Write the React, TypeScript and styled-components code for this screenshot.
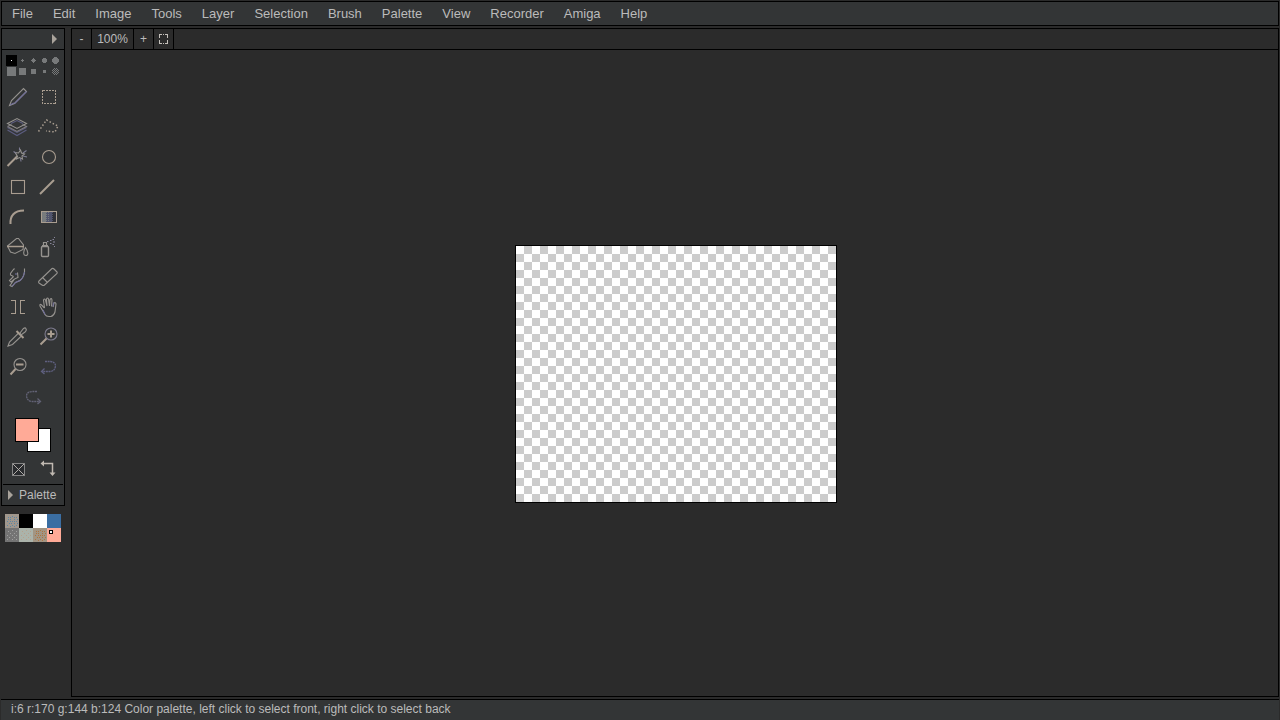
import React from "react";
import styled, { createGlobalStyle, css } from "styled-components";

const TAN = "#a99d90";
const GREY = "#96938f";
const BLUE = "#5c5d80";
const VIOLET = "#72709a";

const GlobalStyle = createGlobalStyle`
  *, *::before, *::after { box-sizing: border-box; }
  body {
    margin: 0;
    background: #2b2b2b;
    color: #bbbbbb;
    font: 12px/16px "Liberation Sans", Arial, sans-serif;
  }
  button {
    margin: 0;
    padding: 0;
    border: 0;
    background: none;
    color: inherit;
    font: inherit;
    cursor: pointer;
  }
  svg { display: block; }
`;

const App = styled.div`
  display: flex;
  flex-direction: column;
  gap: 2px;
  min-height: 100vh;
  padding: 1px 1px 0;
`;

const MenuBar = styled.nav`
  display: flex;
  height: 25px;
  border: 1px solid #000;
  background: #333536;
`;

const MenuItem = styled.button`
  padding: 0 10px;
  font-size: 13px;
  &:hover { background: #444648; }
`;

const Workspace = styled.main`
  flex: 1;
  display: flex;
  gap: 6px;
`;

const Sidebar = styled.aside`
  width: 64px;
  flex: none;
`;

const Panel = styled.section`
  border: 1px solid #000;
  background: #333536;
`;

const PanelHeader = styled.header`
  display: flex;
  justify-content: flex-end;
  height: 21px;
  padding-right: 7px;
  border-bottom: 1px solid #000;
`;

const BrushGrid = styled.div`
  display: grid;
  grid-template-columns: repeat(5, 11px);
  grid-auto-rows: 11px;
  justify-content: center;
  padding: 5px 0;
`;

const BrushButton = styled.button<{ $active?: boolean }>`
  background: ${(p) => (p.$active ? "#000" : "none")};
`;

const ToolGrid = styled.div`
  display: flex;
  flex-wrap: wrap;
  justify-content: center;
`;

const ToolButton = styled.button`
  width: 30px;
  height: 30px;
`;

const ColorPair = styled.div`
  position: relative;
  height: 42px;
`;

const Swatch = styled.button<{ $front?: boolean }>`
  position: absolute;
  width: 24px;
  height: 24px;
  border: 1px solid #000;
  ${(p) =>
    p.$front
      ? css`left: 13px; top: 6px; z-index: 1; background: #ffaa97;`
      : css`left: 25px; top: 16px; background: #fff;`}
`;

const ColorActions = styled.div`
  display: flex;
  justify-content: center;
`;

const PaletteHeader = styled.button`
  display: flex;
  align-items: center;
  gap: 6px;
  width: 60px;
  height: 21px;
  margin: 0 1px;
  padding-left: 5px;
  border-top: 1px solid #000;
`;

const PaletteColors = styled.div`
  display: grid;
  grid-template-columns: repeat(4, 14px);
  grid-auto-rows: 14px;
  padding: 8px 4px;
`;

const PaletteColor = styled.button<{ $color: string }>`
  background: ${(p) => p.$color};
`;

const Editor = styled.section`
  flex: 1;
  display: flex;
  flex-direction: column;
  border: 1px solid #000;
`;

const ZoomBar = styled.div`
  display: flex;
  height: 21px;
  border-bottom: 1px solid #000;
`;

const ZoomButton = styled.button<{ $wide?: boolean }>`
  display: flex;
  align-items: center;
  justify-content: center;
  width: ${(p) => (p.$wide ? 42 : 20)}px;
  border-right: 1px solid #000;
`;

const Stage = styled.div`
  flex: 1;
  display: flex;
  align-items: center;
  justify-content: center;
  padding: 2px 0 0 2px;
`;

const Artboard = styled.div`
  width: 322px;
  height: 258px;
  border: 1px solid #000;
  background: conic-gradient(#ccc 25%, #fff 0 50%, #ccc 0 75%, #fff 0) 0 0 / 16px 16px;
`;

const StatusBar = styled.footer`
  height: 21px;
  padding: 1px 10px;
  border-top: 1px solid #000;
  background: #333536;
`;

const menus = ["File", "Edit", "Image", "Tools", "Layer", "Selection", "Brush", "Palette", "View", "Recorder", "Amiga", "Help"];

const Arrow = () => (
  <svg width="5" height="20" viewBox="0 0 5 20" aria-hidden="true">
    <path d="M0 5L5 10L0 15Z" fill="#a9a39b" />
  </svg>
);

const brushes: { name: string; shape: React.ReactNode }[] = [
  { name: "Pixel", shape: <rect x="5" y="5" width="1" height="1" fill="#fff" /> },
  { name: "Small circle", shape: <path d="M5 4h1v1h1v1h-1v1h-1v-1h-1v-1h1z" /> },
  { name: "Medium circle", shape: <path d="M5 3h1v1h1v1h1v1h-1v1h-1v1h-1v-1h-1v-1h-1v-1h1v-1h1z" /> },
  { name: "Large circle", shape: <path d="M4 3h3v1h1v3h-1v1h-3v-1h-1v-3h1z" /> },
  { name: "Huge circle", shape: <path d="M4 2h3v1h1v1h1v3h-1v1h-1v1h-3v-1h-1v-1h-1v-3h1v-1h1z" /> },
  { name: "Huge square", shape: <rect x="1" y="1" width="9" height="9" /> },
  { name: "Large square", shape: <rect x="2" y="2" width="7" height="7" /> },
  { name: "Medium square", shape: <rect x="3" y="3" width="5" height="5" /> },
  { name: "Small square", shape: <rect x="4" y="4" width="3" height="3" /> },
  {
    name: "Dither",
    shape: <path d="M4 2h1v1h-1zM6 2h1v1h-1zM3 3h1v1h-1zM5 3h1v1h-1zM7 3h1v1h-1zM2 4h1v1h-1zM4 4h1v1h-1zM6 4h1v1h-1zM8 4h1v1h-1zM3 5h1v1h-1zM5 5h1v1h-1zM7 5h1v1h-1zM2 6h1v1h-1zM4 6h1v1h-1zM6 6h1v1h-1zM8 6h1v1h-1zM3 7h1v1h-1zM5 7h1v1h-1zM7 7h1v1h-1zM4 8h1v1h-1zM6 8h1v1h-1z" />,
  },
];

const tools: { name: string; icon: React.ReactNode }[] = [
  {
    name: "Pencil",
    icon: (
      <>
        <path d="M6.5 23.5L8.5 18.5L20.5 6.5L23.5 9.5L11.5 21.5Z" />
        <path d="M11.5 21.5L23.5 9.5M7 23L11 21" stroke={VIOLET} />
      </>
    ),
  },
  {
    name: "Select",
    icon: <rect x="9.5" y="8.5" width="13" height="13" stroke={TAN} strokeDasharray="2 1" shapeRendering="crispEdges" />,
  },
  {
    name: "Layers",
    icon: (
      <>
        <path d="M4.5 18L14 23.5L23.5 18M4.5 15.5L14 20.5L23.5 15.5" stroke={BLUE} />
        <path d="M4.5 14.5L8.5 12.5M4.5 14.5L14 19.5L23.5 14.5L19.5 12.5" stroke="#817e80" />
        <path d="M4.5 11.5L14 6.5L23.5 11.5L14 16.5Z" />
        <path d="M8 11.5L14 8.5L20 11.5" stroke={BLUE} />
      </>
    ),
  },
  {
    name: "Polygon select",
    icon: (
      <path d="M5.5 19.5L13.5 8L19 11L25 14L22 20L13 19" stroke={TAN} strokeWidth="1.5" strokeDasharray="1.5 2" />
    ),
  },
  {
    name: "Magic wand",
    icon: (
      <>
        <path d="M4.5 24L14.5 14" stroke={TAN} strokeWidth="2" />
        <path d="M12 10.5L15.5 11L17.5 8L18.5 11L21.5 12L19 14L19.5 17L16.5 15.5L13.5 17L14 13.5Z" />
        <path d="M16.5 5.5V8M20 11L23.5 8.5M20 14L24 15M17.5 16L18 19.5M10.5 9.5L13 11" stroke="#7d7c92" />
      </>
    ),
  },
  { name: "Ellipse", icon: <circle cx="16" cy="15" r="6.5" stroke={TAN} /> },
  { name: "Rectangle", icon: <rect x="8.5" y="8.5" width="13" height="13" stroke={TAN} /> },
  { name: "Line", icon: <path d="M7 22L21 8" stroke={TAN} strokeWidth="2" /> },
  { name: "Curve", icon: <path d="M7.5 22C7 14 11 8.5 21 8.5" stroke={TAN} strokeWidth="2" /> },
  {
    name: "Gradient",
    icon: (
      <g shapeRendering="crispEdges">
        <rect x="9" y="10" width="4" height="10" fill="#777b7d" stroke="none" />
        <rect x="13" y="10" width="6" height="10" fill="#50546d" stroke="none" />
        <rect x="19" y="10" width="4" height="10" fill="#303138" stroke="none" />
        <path d="M13.5 10V20M15.5 10V20" stroke="#777b7d" strokeDasharray="1 1" />
        <path d="M19.5 10V20" stroke="#50546d" strokeDasharray="1 1" />
        <rect x="8.5" y="9.5" width="15" height="11" stroke={TAN} />
      </g>
    ),
  },
  {
    name: "Flood fill",
    icon: (
      <>
        <path d="M4.5 14L13.5 6.5L15.5 6.5L20.5 13L20 17.5L12 21.5L7.5 20Z" />
        <path d="M4 14.5H21" stroke={TAN} strokeWidth="1.5" />
        <path d="M22.5 15.5C20 19.5 20 23.5 22.8 23.5S25.5 19.5 22.5 15.5Z" />
      </>
    ),
  },
  {
    name: "Spray can",
    icon: (
      <>
        <rect x="8.5" y="14.5" width="7" height="10" rx="1" strokeWidth="1.4" />
        <path d="M9 13.5H15M10.5 13V10.500H13.5V13" strokeWidth="1.2" />
        <path d="M14 9.5H15.500M17 8.5H18.500M19.500 7.5H21M21 5.5H22M17 11.5H18.500M20 10H22M19.500 12.5H21M21 14.5H22" stroke="#88869a" strokeWidth="1.2" />
      </>
    ),
  },
  {
    name: "Smudge",
    icon: (
      <>
        <path d="M21.5 6.500V10Q20.500 16 17 18.500L12.500 20.500L9 24.500L7 23.500L11.500 17L8 20L6.500 18.500L10.500 14.500" />
        <path d="M10.500 14.500L7.500 13V11.500L10 8L11.500 6.500M11.500 17L15 15.500L14.500 10.500" />
        <path d="M9 24.500L12.500 20.500L17 18.500Q20.500 16 21.500 10M13 13V11" stroke={VIOLET} />
      </>
    ),
  },
  {
    name: "Eraser",
    icon: (
      <>
        <path d="M6 19L19 6.5Q20 6 21 7L24 10Q24.5 10.5 24 11.5L11.5 23Q10.5 24 9 23L6 21Q5 20 6 19Z" />
        <path d="M9.5 15.5L14.5 20.5" />
      </>
    ),
  },
  {
    name: "Text",
    icon: <path d="M8 8.5H12.500V21.500H8M22 8.500H17.500V21.500H22" stroke={TAN} shapeRendering="crispEdges" />,
  },
  {
    name: "Pan",
    icon: (
      <>
        <path d="M11.5 16L8 12.5Q6.5 12 7 14L12 22.5Q13 24.5 16 24.5H18Q21 23.5 22 20L23 12Q22.5 10 21 11L20 15" />
        <path d="M11.5 16L10.5 8Q11.5 6 12.5 8L14 14M14 14L13.5 7Q14.5 5 15.5 7L16.5 14M16.5 14L17 7.5Q18.5 5.5 19 8L18.5 14.5" />
        <path d="M20 14.5L20.5 10.5M10 18L12 22.5" stroke={VIOLET} />
      </>
    ),
  },
  {
    name: "Color picker",
    icon: (
      <>
        <path d="M5 24L6.5 20L15.5 11L18.5 14L9.5 22.5Z" />
        <path d="M13.5 9L20.5 16" strokeWidth="2" stroke={TAN} />
        <path d="M17 11L20.5 6.5Q22.5 5 23 7Q24 8 22 10L18 13Z" />
      </>
    ),
  },
  {
    name: "Zoom in",
    icon: (
      <>
        <circle cx="18" cy="12" r="6" stroke="#7c7a8c" />
        <path d="M18 8.5V15.5M14.5 12H21.5M7.5 22.5L13.5 16.5" stroke={TAN} strokeWidth="2" />
      </>
    ),
  },
  {
    name: "Zoom out",
    icon: (
      <>
        <circle cx="17" cy="12.5" r="6" />
        <path d="M13 12.5H20.5M7.5 22.5L12.5 17" stroke={TAN} strokeWidth="2" />
      </>
    ),
  },
  {
    name: "Undo",
    icon: (
      <g stroke="#5f6080" strokeWidth="1.3">
        <path d="M12 9.5H17.500Q22.500 10 22.500 14Q22 19 17 19.500H9" strokeDasharray="2 0.6" />
        <path d="M11.5 16.5L8.500 19.5L11.5 22" />
      </g>
    ),
  },
  {
    name: "Redo",
    icon: (
      <g stroke="#626275" strokeWidth="1.3">
        <path d="M19 9.5H14Q8.5 10 8.5 14Q9 19 14 19.5H22" strokeDasharray="2 0.6" />
        <path d="M19.5 16.5L22.500 19.5L19.500 22" />
      </g>
    ),
  },
];

const scatter: [number, number][] = [
  [3, 3], [7, 2], [11, 3], [5, 5], [9, 5], [2, 7], [7, 7], [11, 7], [4, 9], [9, 9], [2, 11], [7, 11], [11, 11],
];
const scatterDense: [number, number][] = [
  ...scatter, [5, 3], [9, 3], [3, 5], [12, 5], [5, 7], [9, 7], [6, 9], [12, 9], [5, 12], [9, 12],
];

const Dots = ({ color, dense }: { color: string; dense?: boolean }) => (
  <svg width="14" height="14" viewBox="0 0 14 14" aria-hidden="true" fill={color}>
    {(dense ? scatterDense : scatter).map(([x, y]) => (
      <rect key={`${x}-${y}`} x={x} y={y} width="1" height="1" />
    ))}
  </svg>
);

const palette: { color: string; mark?: React.ReactNode }[] = [
  { color: "#a0978d", mark: <Dots color="#5b86a5" dense /> },
  { color: "#000000" },
  { color: "#ffffff" },
  { color: "#3b6ea2" },
  { color: "#747474", mark: <Dots color="#a0a0a0" /> },
  { color: "#abb3aa", mark: <Dots color="#b5a08b" /> },
  { color: "#a29583", mark: <Dots color="#ad7440" dense /> },
  {
    color: "#ffaa97",
    mark: (
      <svg width="14" height="14" viewBox="0 0 14 14" aria-hidden="true">
        <rect x="2.5" y="2.5" width="3" height="3" fill="#fff" stroke="#000" />
      </svg>
    ),
  },
];

export default function PaintApp() {
  return (
    <App>
      <GlobalStyle />
      <MenuBar>
        {menus.map((m) => (
          <MenuItem key={m}>{m}</MenuItem>
        ))}
      </MenuBar>
      <Workspace>
        <Sidebar>
          <Panel>
            <PanelHeader>
              <button aria-label="Expand tools"><Arrow /></button>
            </PanelHeader>
            <BrushGrid>
              {brushes.map((b, i) => (
                <BrushButton key={b.name} aria-label={b.name} $active={i === 0}>
                  <svg width="11" height="11" viewBox="0 0 11 11" fill="#77797a" shapeRendering="crispEdges">
                    {b.shape}
                  </svg>
                </BrushButton>
              ))}
            </BrushGrid>
            <ToolGrid>
              {tools.map((t) => (
                <ToolButton key={t.name} aria-label={t.name}>
                  <svg width="30" height="30" viewBox="0 0 30 30" fill="none" stroke={GREY} strokeWidth="1.1">
                    {t.icon}
                  </svg>
                </ToolButton>
              ))}
            </ToolGrid>
            <ColorPair>
              <Swatch $front aria-label="Front color" />
              <Swatch aria-label="Back color" />
            </ColorPair>
            <ColorActions>
              <ToolButton aria-label="Transparent color">
                <svg width="30" height="30" viewBox="0 0 30 30" fill="none">
                  <rect x="9.5" y="9.5" width="12" height="12" fill="#292b2e" stroke="#858585" />
                  <path d="M10 10L21 21M21 10L10 21" stroke="#b0aca8" />
                </svg>
              </ToolButton>
              <ToolButton aria-label="Swap colors">
                <svg width="30" height="30" viewBox="0 0 30 30" fill="none">
                  <path d="M10 9.5H19.5V19" stroke="#c0b9b1" strokeWidth="1.5" />
                  <path d="M7.5 9.5L11 6.5V12.5ZM19.5 22L16.5 18.5H22.5Z" fill="#c0b9b1" />
                </svg>
              </ToolButton>
            </ColorActions>
            <PaletteHeader>
              <Arrow />
              Palette
            </PaletteHeader>
          </Panel>
          <PaletteColors>
            {palette.map((c) => (
              <PaletteColor key={c.color} $color={c.color} aria-label={c.color}>
                {c.mark}
              </PaletteColor>
            ))}
          </PaletteColors>
        </Sidebar>
        <Editor>
          <ZoomBar>
            <ZoomButton aria-label="Zoom out view">-</ZoomButton>
            <ZoomButton $wide>100%</ZoomButton>
            <ZoomButton aria-label="Zoom in view">+</ZoomButton>
            <ZoomButton aria-label="Fit to screen">
              <svg width="9" height="10" viewBox="0 0 9 10" fill="none" stroke="#c4c0bb" shapeRendering="crispEdges">
                <path d="M0.5 4V0.5H3M6 0.5H8.5V4M8.5 6V9.5H6M3 9.5H0.5V6M4 0.5H5M4 9.5H5" />
              </svg>
            </ZoomButton>
          </ZoomBar>
          <Stage>
            <Artboard />
          </Stage>
        </Editor>
      </Workspace>
      <StatusBar>i:6 r:170 g:144 b:124 Color palette, left click to select front, right click to select back</StatusBar>
    </App>
  );
}
